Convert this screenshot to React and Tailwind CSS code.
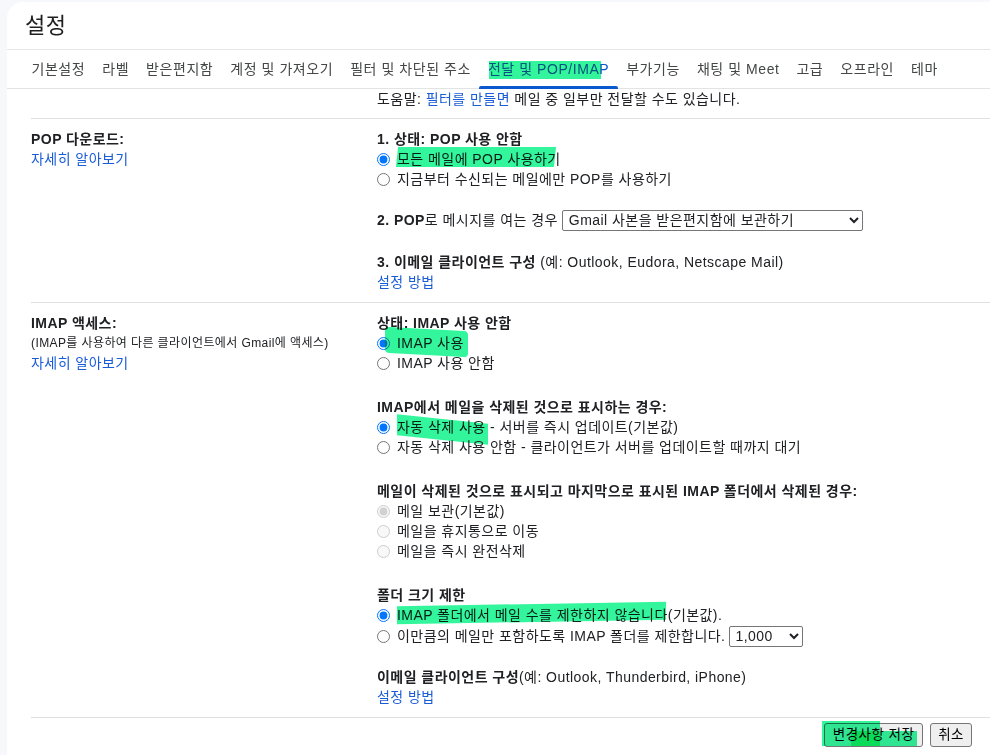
import React from 'react';

const tabs = [
  '기본설정',
  '라벨',
  '받은편지함',
  '계정 및 가져오기',
  '필터 및 차단된 주소',
  '전달 및 POP/IMAP',
  '부가기능',
  '채팅 및 Meet',
  '고급',
  '오프라인',
  '테마',
];

const Mark = ({ className }) => (
  <span className={`absolute bg-[#33f59c] mix-blend-multiply pointer-events-none ${className}`} />
);

const Radio = ({ checked, disabled, children, name }) => (
  <label className="flex items-center h-5">
    <input
      type="radio"
      name={name}
      defaultChecked={checked}
      disabled={disabled}
      className="m-0 mr-[7px] w-[13px] h-[13px]"
    />
    <span className="relative">{children}</span>
  </label>
);

const Link = ({ children }) => <span className="text-[#1a5cd7]">{children}</span>;

export default function App() {
  return (
    <div
      className="min-h-screen bg-[#f6f8fc] pl-[7px] pt-[2px] text-[#202124]"
      style={{ fontFamily: '"Liberation Sans", "Noto Sans CJK KR", sans-serif' }}
    >
      <div className="bg-white rounded-tl-2xl min-h-[753px] overflow-hidden">
        {/* Header */}
        <div className="h-[48px] flex items-center pl-[18px] text-[22px] tracking-[0.5px] text-[#1f1f1f] border-b border-[#e6e6e6]">
          설정
        </div>

        {/* Tabs */}
        <div className="flex pl-[16px] h-[39px] border-b border-[#e3e3e3] text-[14px] tracking-[0.55px]">
          {tabs.map((t) => {
            const active = t === '전달 및 POP/IMAP';
            return (
              <div
                key={t}
                className={`relative px-[8.5px] flex items-center whitespace-nowrap ${
                  active ? 'text-[#0b57d0]' : 'text-[#444746]'
                }`}
              >
                <span className="relative">
                  {t}
                  {active && <Mark className="left-[1px] right-[8px] top-[2px] bottom-[1px]" />}
                </span>
                {active && (
                  <span className="absolute left-0 right-0 bottom-[-1px] h-[3px] bg-[#0b57d0] rounded-t-[2px]" />
                )}
              </div>
            );
          })}
        </div>

        {/* Content */}
        <div className="pl-[24px] text-[14px] tracking-[0.45px] leading-5">
          <div className="flex h-[30px] border-b border-[#e0e0e0]">
            <div className="w-[346px] shrink-0" />
            <div>
              도움말: <Link>필터를 만들면</Link> 메일 중 일부만 전달할 수도 있습니다.
            </div>
          </div>

          {/* POP */}
          <div className="flex border-b border-[#e0e0e0] pt-[10px] pb-[10px]">
            <div className="w-[346px] shrink-0">
              <div className="font-bold">POP 다운로드:</div>
              <Link>자세히 알아보기</Link>
            </div>
            <div>
              <div className="font-bold">1. 상태: POP 사용 안함</div>
              <Radio name="pop" checked>
                모든 메일에 POP 사용하기
                <Mark className="left-0 right-[6px] top-[-2px] bottom-[2px] -skew-x-6" />
              </Radio>
              <Radio name="pop">지금부터 수신되는 메일에만 POP를 사용하기</Radio>
              <div className="mt-5 flex items-center h-[22px]">
                <span>
                  <b>2. POP</b>로 메시지를 여는 경우
                </span>
                <select className="ml-[4px] w-[301px] h-[21px] border border-[#767676] rounded-[2px] text-[14px] tracking-[0.45px] pl-[2px] bg-white">
                  <option>Gmail 사본을 받은편지함에 보관하기</option>
                </select>
              </div>
              <div className="mt-[21px]">
                <b>3. 이메일 클라이언트 구성</b> (예: Outlook, Eudora, Netscape Mail)
              </div>
              <Link>설정 방법</Link>
            </div>
          </div>

          {/* IMAP */}
          <div className="flex border-b border-[#e0e0e0] pt-[10px] pb-[10px]">
            <div className="w-[346px] shrink-0">
              <div className="font-bold">IMAP 액세스:</div>
              <div className="text-[12px] tracking-[0.4px]">(IMAP를 사용하여 다른 클라이언트에서 Gmail에 액세스)</div>
              <Link>자세히 알아보기</Link>
            </div>
            <div>
              <div className="font-bold">상태: IMAP 사용 안함</div>
              <Radio name="imap" checked>
                IMAP 사용
                <Mark className="left-[-12px] right-[-4px] top-[-4px] bottom-[-2px] skew-y-3 rounded-sm" />
              </Radio>
              <Radio name="imap">IMAP 사용 안함</Radio>

              <div className="mt-6 font-bold">IMAP에서 메일을 삭제된 것으로 표시하는 경우:</div>
              <Radio name="del" checked>
                <span className="relative">
                  자동 삭제 사용
                  <Mark className="left-0 right-[-2px] top-[0px] bottom-[-5px] skew-y-6" />
                </span>{' '}
                - 서버를 즉시 업데이트(기본값)
              </Radio>
              <Radio name="del">자동 삭제 사용 안함 - 클라이언트가 서버를 업데이트할 때까지 대기</Radio>

              <div className="mt-6 font-bold">
                메일이 삭제된 것으로 표시되고 마지막으로 표시된 IMAP 폴더에서 삭제된 경우:
              </div>
              <Radio name="exp" checked disabled>메일 보관(기본값)</Radio>
              <Radio name="exp" disabled>메일을 휴지통으로 이동</Radio>
              <Radio name="exp" disabled>메일을 즉시 완전삭제</Radio>

              <div className="mt-6 font-bold">폴더 크기 제한</div>
              <Radio name="lim" checked>
                <span className="relative">
                  IMAP 폴더에서 메일 수를 제한하지 않습니다
                  <Mark className="left-0 right-[2px] top-[-3px] bottom-[1px] -skew-y-1" />
                </span>
                (기본값).
              </Radio>
              <label className="flex items-center h-[22px]">
                <input type="radio" name="lim" className="m-0 mr-[7px] w-[13px] h-[13px]" />
                <span>이만큼의 메일만 포함하도록 IMAP 폴더를 제한합니다.</span>
                <select className="ml-[4px] w-[74px] h-[21px] border border-[#767676] rounded-[2px] text-[14px] tracking-[0.45px] pl-[1px] bg-white">
                  <option>1,000</option>
                </select>
              </label>

              <div className="mt-5">
                <b>이메일 클라이언트 구성</b>(예: Outlook, Thunderbird, iPhone)
              </div>
              <Link>설정 방법</Link>
            </div>
          </div>

          {/* Buttons */}
          <div className="flex justify-end gap-[7px] pt-[5px] pr-[18px]">
            <button className="relative h-[24px] px-[8px] bg-[#efefef] border border-[#767676] rounded-[3px] text-[13.5px] tracking-[0.45px] text-black">
              변경사항 저장
              <Mark className="left-[-3px] w-[58px] top-[-3px] bottom-[0px]" />
              <Mark className="left-[26px] w-[66px] top-[7px] bottom-[0px]" />
            </button>
            <button className="h-[24px] px-[7px] bg-[#efefef] border border-[#767676] rounded-[3px] text-[13.5px] tracking-[0.45px] text-black">
              취소
            </button>
          </div>
        </div>
      </div>
    </div>
  );
}
